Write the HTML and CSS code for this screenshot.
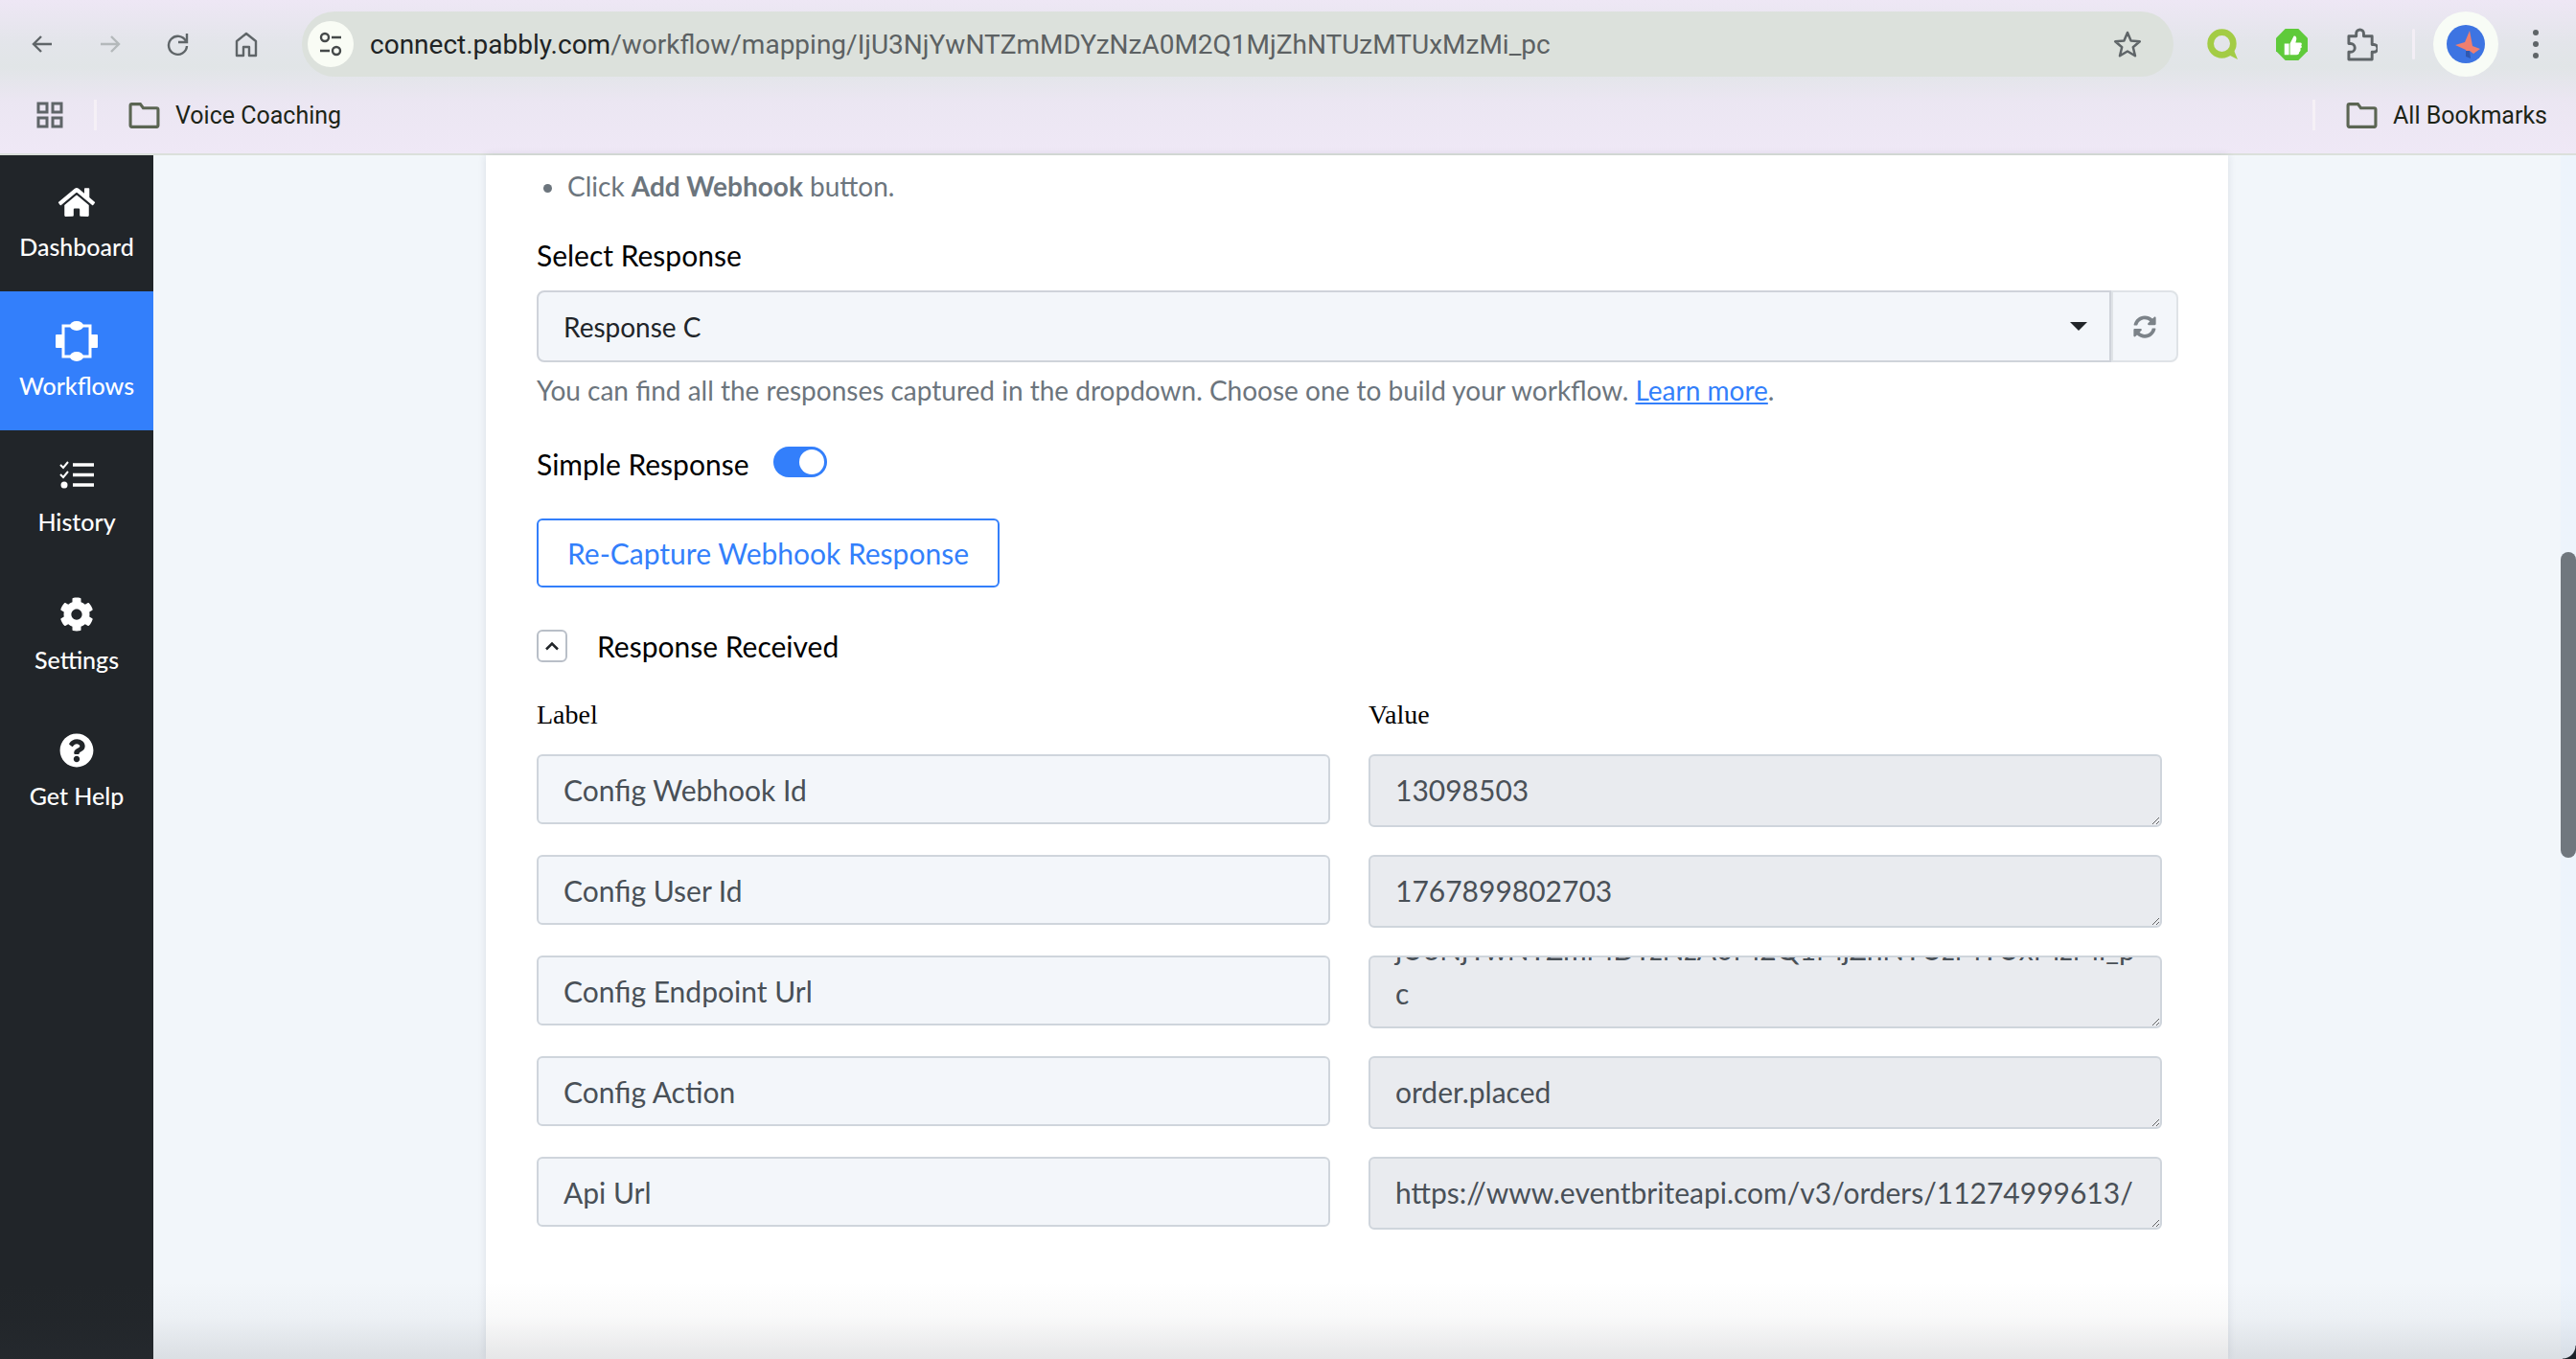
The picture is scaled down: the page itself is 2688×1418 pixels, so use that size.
FILE: index.html
```html
<!DOCTYPE html>
<html>
<head>
  <meta charset="utf-8">
  <title>Pabbly Connect</title>
  <link rel="stylesheet" href="styles.css">
</head>
<body>
  <div class="chrome">
    <div class="toolbar">
      <div class="nav-icons">
        <svg class="tb-icon" viewBox="0 0 28 28"><path d="M24 14H5M13 6l-8 8 8 8" fill="none" stroke="#5f6568" stroke-width="2.4"/></svg>
        <svg class="tb-icon" viewBox="0 0 28 28"><path d="M4 14h19M15 6l8 8-8 8" fill="none" stroke="#b4b9bb" stroke-width="2.4"/></svg>
        <svg class="tb-icon" viewBox="0 0 28 28"><path d="M22 11a9.5 9.5 0 1 0 1 5" fill="none" stroke="#5f6568" stroke-width="2.4"/><path d="M23 3v9h-9" fill="none" stroke="#5f6568" stroke-width="2.4"/></svg>
        <svg class="tb-icon" viewBox="0 0 28 28"><path d="M14 3L4 11v15h7v-9h6v9h7V11z" fill="none" stroke="#5f6568" stroke-width="2.4" stroke-linejoin="round"/></svg>
      </div>
      <div class="omnibox">
        <span class="site-badge">
          <svg width="26" height="28" viewBox="0 0 26 28"><circle cx="7" cy="7" r="4" fill="none" stroke="#45494a" stroke-width="2.4"/><path d="M14 7h10M2 21h10" stroke="#45494a" stroke-width="2.4"/><circle cx="19" cy="21" r="4" fill="none" stroke="#45494a" stroke-width="2.4"/></svg>
        </span>
        <span class="url"><span class="url-host">connect.pabbly.com</span>/workflow/mapping/IjU3NjYwNTZmMDYzNzA0M2Q1MjZhNTUzMTUxMzMi_pc</span>
        <svg class="star" viewBox="0 0 32 32"><path d="M16 4l3.6 8.6 9.2.7-7 6 2.2 9L16 23.500 8 28.300l2.200-9-7-6 9.200-.7z" fill="none" stroke="#5f6568" stroke-width="2.500" stroke-linejoin="round"/></svg>
      </div>
      <div class="ext-icons">
        <svg class="ext q-ext" viewBox="0 0 32 34"><circle cx="16" cy="16" r="11.500" fill="none" stroke="#a3cc45" stroke-width="6.500"/><path d="M20 26l12 6-5-12z" fill="#a3cc45"/></svg>
        <svg class="ext" viewBox="0 0 34 36"><path d="M10 1h14l10 10v14L24 35H10L0 25V11z" fill="#5fca3a"/><path d="M9 17h5v12H9zM15 17l4-8c2-1 3 1 3 3l-1 4h5c2 0 2 2 1 3 1 1 1 3-1 3 1 2 0 3-1 4 0 2-1 3-3 3h-7z" fill="#fff"/></svg>
        <svg class="ext" viewBox="0 0 34 36"><path d="M3 9h8V6a4 4 0 0 1 8 0v3h9v9h2a4 4 0 0 1 0 8h-2v8H3v-8h2a4.500 4.500 0 0 0 0-9H3z" fill="none" stroke="#5f6568" stroke-width="3" stroke-linejoin="round"/></svg>
      </div>
      <span class="tb-sep"></span>
      <span class="profile">
        <svg width="40" height="40" viewBox="0 0 40 40"><circle cx="20" cy="20" r="20" fill="#3d74e2"/><path d="M24 6l3 16 8 3-7 5-4-3-3 3-1-4-11-5 10-3z" fill="#ee7f6f"/><path d="M20 27l4 0 1 8-5-2z" fill="#2f58b0"/></svg>
      </span>
      <span class="dots"><i></i><i></i><i></i></span>
    </div>
    <div class="bookmarks">
      <svg class="apps" viewBox="0 0 28 28" fill="none" stroke="#5f6568" stroke-width="3"><rect x="2" y="2" width="9" height="9"/><rect x="17" y="2" width="9" height="9"/><rect x="2" y="17" width="9" height="9"/><rect x="17" y="17" width="9" height="9"/></svg>
      <span class="bm-sep"></span>
      <svg class="folder" viewBox="0 0 32 26"><path d="M2 3a1.500 1.500 0 0 1 1.500-1.500H12l3 4h13.500A1.500 1.500 0 0 1 30 7v16a1.500 1.500 0 0 1-1.500 1.500h-25A1.500 1.500 0 0 1 2 23z" fill="none" stroke="#5b6553" stroke-width="3"/></svg>
      <span class="bm-label">Voice Coaching</span>
      <span class="bm-spacer"></span>
      <span class="bm-sep"></span>
      <svg class="folder" viewBox="0 0 32 26"><path d="M2 3a1.500 1.500 0 0 1 1.500-1.500H12l3 4h13.500A1.500 1.500 0 0 1 30 7v16a1.500 1.500 0 0 1-1.500 1.500h-25A1.500 1.500 0 0 1 2 23z" fill="none" stroke="#5b6553" stroke-width="3"/></svg>
      <span class="bm-label">All Bookmarks</span>
    </div>
  </div>

  <div class="app">
    <nav class="sidebar">
      <a class="side-item">
        <svg class="i-home" viewBox="0 0 576 512"><path fill="#fff" d="M280.37 148.26L96 300.11V464a16 16 0 0 0 16 16l112.06-.29a16 16 0 0 0 15.92-16V368a16 16 0 0 1 16-16h64a16 16 0 0 1 16 16v95.64a16 16 0 0 0 16 16.05L464 480a16 16 0 0 0 16-16V300L295.67 148.26a12.19 12.19 0 0 0-15.3 0zM571.6 251.47L488 182.56V44.05a12 12 0 0 0-12-12h-56a12 12 0 0 0-12 12v72.61L318.47 43a48 48 0 0 0-61 0L4.34 251.47a12 12 0 0 0-1.6 16.9l25.5 31A12 12 0 0 0 45.15 301l235.22-193.74a12.19 12.19 0 0 1 15.3 0L530.9 301a12 12 0 0 0 16.9-1.6l25.5-31a12 12 0 0 0-1.7-16.93z"/></svg>
        <span>Dashboard</span>
      </a>
      <a class="side-item active">
        <svg class="i-flow" viewBox="0 0 44 44"><rect x="8" y="6" width="28" height="32" fill="none" stroke="#fff" stroke-width="3"/><ellipse cx="22" cy="6" rx="7" ry="5" fill="#fff"/><ellipse cx="22" cy="38" rx="7" ry="5" fill="#fff"/><rect x="0" y="15" width="9" height="14" rx="1" fill="#fff"/><rect x="35" y="15" width="9" height="14" rx="1" fill="#fff"/></svg>
        <span>Workflows</span>
      </a>
      <a class="side-item">
        <svg class="i-hist" viewBox="0 0 36 29"><path d="M1 4l3 3 5-6M1 14l3 3 5-6" fill="none" stroke="#fff" stroke-width="2"/><circle cx="5" cy="25" r="3.500" fill="#fff"/><path d="M14 4h22M14 14.500h22M14 25h22" stroke="#fff" stroke-width="3.500"/></svg>
        <span>History</span>
      </a>
      <a class="side-item">
        <svg class="i-cog" viewBox="0 0 512 512"><path fill="#fff" d="M487.4 315.7l-42.6-24.6c4.3-23.2 4.3-47 0-70.2l42.6-24.6c4.9-2.8 7.1-8.6 5.5-14-11.1-35.6-30-67.8-54.7-94.6-3.8-4.1-10-5.1-14.8-2.3L380.8 110c-17.9-15.4-38.5-27.3-60.8-35.1V25.8c0-5.6-3.9-10.5-9.4-11.7-36.7-8.2-74.3-7.8-109.2 0-5.5 1.2-9.4 6.1-9.4 11.7V75c-22.2 7.9-42.8 19.8-60.8 35.1L88.7 85.5c-4.9-2.8-11-1.9-14.8 2.3-24.7 26.7-43.6 58.9-54.7 94.6-1.7 5.4.6 11.2 5.5 14L67.3 221c-4.3 23.2-4.3 47 0 70.2l-42.6 24.6c-4.9 2.8-7.1 8.6-5.5 14 11.1 35.6 30 67.8 54.7 94.6 3.8 4.1 10 5.1 14.8 2.3l42.6-24.6c17.9 15.4 38.5 27.3 60.8 35.1v49.2c0 5.6 3.9 10.5 9.4 11.7 36.7 8.2 74.3 7.8 109.2 0 5.5-1.2 9.4-6.1 9.4-11.7v-49.2c22.2-7.9 42.8-19.8 60.8-35.1l42.6 24.6c4.9 2.8 11 1.9 14.8-2.3 24.7-26.7 43.6-58.9 54.7-94.6 1.5-5.5-.7-11.3-5.6-14.1zM256 336c-44.1 0-80-35.9-80-80s35.9-80 80-80 80 35.9 80 80-35.9 80-80 80z"/></svg>
        <span>Settings</span>
      </a>
      <a class="side-item">
        <svg class="i-help" viewBox="0 0 512 512"><path fill="#fff" d="M504 256c0 136.997-111.043 248-248 248S8 392.997 8 256C8 119.083 119.043 8 256 8s248 111.083 248 248zM262.655 90c-54.497 0-89.255 22.957-116.549 63.758-3.536 5.286-2.353 12.415 2.715 16.258l34.699 26.31c5.205 3.947 12.621 3.008 16.665-2.122 17.864-22.658 30.113-35.797 57.303-35.797 20.429 0 45.698 13.148 45.698 32.958 0 14.976-12.363 22.667-32.534 33.976C247.128 238.528 216 254.941 216 296v4c0 6.627 5.373 12 12 12h56c6.627 0 12-5.373 12-12v-1.333c0-28.462 83.186-29.647 83.186-106.667 0-58.002-60.165-102-116.531-102zM256 338c-25.365 0-46 20.635-46 46 0 25.364 20.635 46 46 46s46-20.636 46-46c0-25.365-20.635-46-46-46z"/></svg>
        <span>Get Help</span>
      </a>
    </nav>

    <main class="page">
      <section class="card">
        <ul class="steps">
          <li>Click <b>Add Webhook</b> button.</li>
        </ul>

        <label class="field-label">Select Response</label>
        <div class="select-row">
          <div class="select-box">
            <span>Response C</span>
            <i class="caret"></i>
          </div>
          <button class="refresh">
            <svg width="24" height="24" viewBox="0 0 512 512"><path fill="#7c8389" d="M370.72 133.28C339.458 104.008 298.888 87.962 255.848 88c-77.458.068-144.328 53.178-162.791 126.85-1.344 5.363-6.122 9.15-11.651 9.15H24.103c-7.498 0-13.194-6.807-11.807-14.176C33.933 94.924 134.813 8 256 8c66.448 0 126.791 26.136 171.315 68.685L463.03 40.97C478.149 25.851 504 36.559 504 57.941V192c0 13.255-10.745 24-24 24H345.941c-21.382 0-32.09-25.851-16.971-40.971l41.75-41.749zM32 296h134.059c21.382 0 32.09 25.851 16.971 40.971l-41.75 41.75c31.262 29.273 71.835 45.319 114.876 45.28 77.418-.07 144.315-53.144 162.787-126.849 1.344-5.363 6.122-9.15 11.651-9.15h57.304c7.498 0 13.194 6.807 11.807 14.176C478.067 417.076 377.187 504 256 504c-66.448 0-126.791-26.136-171.315-68.685L48.97 471.03C33.851 486.149 8 475.441 8 454.059V320c0-13.255 10.745-24 24-24z"/></svg>
          </button>
        </div>
        <p class="help">You can find all the responses captured in the dropdown. Choose one to build your workflow. <a href="#">Learn more</a>.</p>

        <div class="switch-row">
          <span class="switch-label">Simple Response</span>
          <span class="switch"><i></i></span>
        </div>

        <button class="recapture">Re-Capture Webhook Response</button>

        <div class="received">
          <span class="collapse-btn">
            <svg width="16" height="12" viewBox="0 0 16 12"><path d="M2 9.500l6-6 6 6" fill="none" stroke="#212529" stroke-width="2.500"/></svg>
          </span>
          <span>Response Received</span>
        </div>

        <div class="map-grid">
          <div class="map-head">Label</div>
          <div class="map-head">Value</div>

          <input class="map-input" value="Config Webhook Id" readonly>
          <textarea class="map-value" readonly>13098503</textarea>

          <input class="map-input" value="Config User Id" readonly>
          <textarea class="map-value" readonly>1767899802703</textarea>

          <input class="map-input" value="Config Endpoint Url" readonly>
          <textarea class="map-value to-end" readonly>https://connect.pabbly.com/workflow/sendwebhookdata/IjU3NjYwNTZmMDYzNzA0M2Q1MjZhNTUzMTUxMzMi_pc</textarea>

          <input class="map-input" value="Config Action" readonly>
          <textarea class="map-value" readonly>order.placed</textarea>

          <input class="map-input" value="Api Url" readonly>
          <textarea class="map-value part-way" readonly>https://www.eventbriteapi.com/v3/orders/11274999613/</textarea>
        </div>
      </section>
      <div class="scroll-track"><div class="scroll-thumb"></div></div>
    </main>
  </div>
  <div class="window-fade"></div>
  <div class="window-corner"></div>

<script>
  // these two boxes are scrolled in the capture
  document.querySelector('.to-end').scrollTop = 9999;
  document.querySelector('.part-way').scrollTop = 18;
</script>
</body>
</html>
```
FILE: styles.css
```css
html, body {
  margin: 0;
  padding: 0;
  height: 100%;
  overflow: hidden;
}

body {
  position: relative;
  display: flex;
  flex-direction: column;
  font-family: Lato, "Noto Sans", sans-serif;
  background-color: #f2f6fa;
}

/* browser bar */
.chrome {
  height: 160px;
  flex-shrink: 0;
  border-bottom: 2px solid #dbe0db;
  background: linear-gradient(180deg, #eee7f5 0, #e3e5ea 45px, #e1e5e7 70px, #ebe6f2 105px, #efe8f6 160px);
}

.toolbar {
  height: 92px;
  display: flex;
  align-items: flex-start;
  padding-top: 12px;
  box-sizing: border-box;
}

.nav-icons {
  width: 315px;
  height: 68px;
  display: flex;
  align-items: center;
  gap: 43px;
  padding-left: 30px;
  box-sizing: border-box;
  flex-shrink: 0;
}

.tb-icon {
  width: 28px;
  height: 28px;
}

.omnibox {
  width: 1953px;
  height: 68px;
  flex-shrink: 0;
  border-radius: 34px;
  background-color: #dce1dc;
  display: flex;
  align-items: center;
  padding-left: 6px;
  box-sizing: border-box;
}

.site-badge {
  width: 48px;
  height: 48px;
  border-radius: 50%;
  background-color: #f9fcf5;
  display: flex;
  align-items: center;
  justify-content: center;
}

.url {
  margin-left: 17px;
  font-family: Roboto, sans-serif;
  font-size: 28px;
  color: #5c6163;
  flex-grow: 1;
}

.url-host {
  color: #202324;
}

.star {
  width: 32px;
  height: 32px;
  margin-right: 32px;
}

.ext-icons {
  display: flex;
  align-items: center;
  height: 68px;
  margin-left: 34px;
  gap: 40px;
}

.ext {
  width: 33px;
  height: 35px;
}

.tb-sep {
  width: 3px;
  height: 32px;
  margin: 18px 0 0 36px;
  border-radius: 2px;
  background-color: #f3eef5;
}

.profile {
  width: 68px;
  height: 68px;
  margin-left: 19px;
  border-radius: 50%;
  background-color: #f8fcf6;
  display: flex;
  align-items: center;
  justify-content: center;
}

.dots {
  height: 68px;
  margin-left: 36px;
  display: flex;
  flex-direction: column;
  align-items: center;
  justify-content: center;
  gap: 6px;
}

.dots i {
  width: 6px;
  height: 6px;
  border-radius: 50%;
  background-color: #5f6568;
}

.bookmarks {
  height: 68px;
  display: flex;
  align-items: center;
  padding: 0 30px 12px 38px;
  box-sizing: border-box;
}

.apps {
  width: 28px;
  height: 28px;
}

.bm-sep {
  width: 3px;
  height: 32px;
  margin: 0 32px;
  background-color: #f5f0f6;
}

.bookmarks .bm-sep:first-of-type {
  margin-right: 33px;
}

.folder {
  width: 33px;
  height: 27px;
  margin-right: 16px;
}

.bm-label {
  font-family: Roboto, sans-serif;
  font-size: 25px;
  color: #1c2417;
}

.bm-spacer {
  flex-grow: 1;
}

/* app */
.app {
  flex-grow: 1;
  min-height: 0;
  display: flex;
}

.sidebar {
  width: 160px;
  flex-shrink: 0;
  background-color: #212529;
  display: flex;
  flex-direction: column;
}

.side-item {
  height: 142px;
  box-sizing: border-box;
  padding-top: 32px;
  display: flex;
  flex-direction: column;
  align-items: center;
  color: #fff;
  font-size: 25px;
  font-weight: 500;
}

.side-item svg {
  height: 34px;
  margin-bottom: 14px;
}

.side-item.active {
  height: 145px;
  padding-top: 30px;
  background-color: #337ffb;
}

.side-item .i-home { width: 40px; }
.side-item .i-flow { width: 44px; height: 44px; margin-bottom: 9px; }
.side-item .i-hist { width: 36px; height: 29px; margin-bottom: 19px; }
.side-item .i-cog { width: 36px; height: 36px; margin-bottom: 14px; }
.side-item .i-help { width: 36px; height: 36px; }

.page {
  flex-grow: 1;
  min-width: 0;
  display: flex;
  position: relative;
  padding-left: 347px;
  padding-right: 347px;
  box-sizing: border-box;
}

.card {
  width: 1818px;
  flex-shrink: 0;
  box-sizing: border-box;
  background-color: #fff;
  padding: 12px 53px 0 53px;
  box-shadow: 0 0 8px rgba(40, 50, 80, 0.12);
}

.steps {
  margin: 0;
  padding: 0 0 0 32px;
  font-size: 28px;
  line-height: 40px;
  color: #6c757d;
}

.field-label {
  display: block;
  margin-top: 32px;
  font-size: 30px;
  line-height: 40px;
  color: #000;
}

.select-row {
  display: flex;
  margin-top: 17px;
  width: 1713px;
}

.select-box {
  width: 1643px;
  height: 75px;
  box-sizing: border-box;
  padding: 0 26px;
  border: 2px solid #cfd3da;
  border-radius: 8px 0 0 8px;
  background-color: #f3f6fa;
  color: #212529;
  font-size: 28px;
  display: flex;
  align-items: center;
  justify-content: space-between;
}

.caret {
  width: 0;
  height: 0;
  border-left: 9px solid transparent;
  border-right: 9px solid transparent;
  border-top: 9px solid #212529;
  margin-right: -3px;
}

.refresh {
  width: 70px;
  height: 75px;
  padding: 0;
  border: 2px solid #dfe3e7;
  border-radius: 0 8px 8px 0;
  background-color: #f3f6fa;
  display: flex;
  align-items: center;
  justify-content: center;
}

.help {
  margin: 9px 0 0;
  font-size: 28px;
  line-height: 40px;
  color: #6c757d;
}

.help a {
  color: #337ffb;
  text-decoration: underline;
}

.switch-row {
  display: flex;
  align-items: center;
  margin-top: 37px;
  height: 40px;
}

.switch-label {
  font-size: 30px;
  color: #000;
}

.switch {
  width: 56px;
  height: 32px;
  margin-left: 26px;
  margin-top: -4px;
  border-radius: 16px;
  background-color: #337ffb;
  display: flex;
  align-items: center;
  justify-content: flex-end;
  padding-right: 3px;
  box-sizing: border-box;
}

.switch i {
  width: 26px;
  height: 26px;
  border-radius: 50%;
  background-color: #fff;
}

.recapture {
  display: block;
  margin-top: 37px;
  width: 483px;
  height: 72px;
  padding: 0;
  border: 2px solid #337ffb;
  border-radius: 6px;
  background-color: #fff;
  color: #337ffb;
  font-family: inherit;
  font-size: 30px;
}

.received {
  display: flex;
  align-items: center;
  gap: 31px;
  margin-top: 44px;
  height: 34px;
  font-size: 30px;
  color: #000;
}

.collapse-btn {
  width: 32px;
  height: 34px;
  box-sizing: border-box;
  border: 2px solid #b9bfc8;
  border-radius: 6px;
  display: flex;
  align-items: center;
  justify-content: center;
}

.map-grid {
  display: grid;
  grid-template-columns: 828px 828px;
  column-gap: 40px;
  row-gap: 32px;
  align-items: start;
  margin-top: 36px;
}

.map-head {
  font-family: "Liberation Serif", serif;
  font-size: 28px;
  line-height: 38px;
  margin-bottom: -10px;
  color: #000;
}

.map-input {
  width: 100%;
  height: 73px;
  box-sizing: border-box;
  padding: 0 26px;
  border: 2px solid #cfd5dc;
  border-radius: 6px;
  background-color: #f3f6fa;
  font-family: inherit;
  font-size: 30px;
  color: #495057;
  outline: none;
}

.map-value {
  display: block;
  width: 100%;
  height: 76px;
  box-sizing: border-box;
  padding: 12px 26px;
  border: 2px solid #cfd5dc;
  border-radius: 6px;
  background-color: #e9ebef;
  font-family: inherit;
  font-size: 30px;
  line-height: 46px;
  color: #495057;
  overflow: hidden;
  overflow-wrap: anywhere;
  resize: vertical;
  outline: none;
  margin-bottom: -32px;
}

/* overlays */
.scroll-track {
  position: absolute;
  top: 0;
  bottom: 0;
  right: 0;
  width: 16px;
  background-color: #edf4fc;
}

.scroll-thumb {
  position: absolute;
  top: 414px;
  left: 0;
  width: 16px;
  height: 319px;
  border-radius: 8px;
  background-color: #70777e;
}

.window-fade {
  position: absolute;
  left: 0;
  right: 0;
  bottom: 0;
  height: 80px;
  pointer-events: none;
  background: linear-gradient(180deg, rgba(60, 65, 75, 0) 0, rgba(60, 65, 75, 0.03) 45%, rgba(60, 65, 75, 0.13) 100%);
}

.window-corner {
  position: absolute;
  right: 0;
  bottom: 0;
  width: 14px;
  height: 14px;
  background: radial-gradient(circle at 0 0, transparent 13px, #1b2129 14px);
}
```
